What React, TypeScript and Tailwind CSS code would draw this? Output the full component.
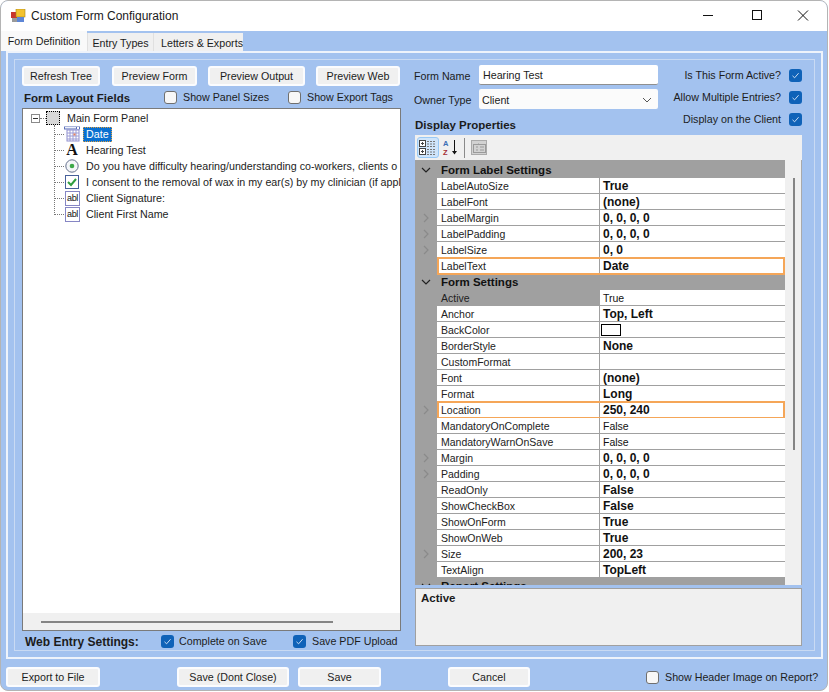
import React from "react";

function Check({ checked = false }: { checked?: boolean }) {
  if (!checked) return <span className="block w-[13px] h-[13px] shrink-0 rounded-[3px] border border-[#6f6f6f] bg-[#f7f7f7]" />;
  return (
    <span className="flex items-center justify-center w-[13px] h-[13px] shrink-0 rounded-[3px] bg-[#0f62b8]">
      <svg width="9" height="9" viewBox="0 0 9 9" fill="none" stroke="#dbe8f7" strokeWidth="0.9"><path d="M1.5 4.800 3.600 6.800 7.600 2.200" /></svg>
    </span>
  );
}

function Btn({ label, w, className = "" }: { label: string; w: string; className?: string }) {
  return (
    <div className={`${w} ${className} h-[20px] shrink-0 flex items-center justify-center pt-px rounded-[3px] border-2 border-[#fbfcfe] bg-[#f0f0f0] text-[#1c1c1c]`}>{label}</div>
  );
}

function TreeIcon({ kind }: { kind: string }) {
  if (kind === "date")
    return (
      <svg width="16" height="16" viewBox="0 0 16 16" className="shrink-0">
        <rect x="0" y="0.500" width="16" height="3" fill="#5b6fb8" />
        <rect x="1" y="1" width="11" height="1.500" fill="#eef1fb" />
        <rect x="13" y="1" width="2" height="2" fill="#fff" />
        <rect x="3" y="4" width="12" height="11" fill="#fff" stroke="#8f8fd0" />
        <path d="M3 7h12M3 10h12M3 13h12M6 4v11M9 4v11M12 4v11" stroke="#9c9cd6" strokeWidth="1" />
        <rect x="9.500" y="7.500" width="2" height="2" fill="#e8825a" />
      </svg>
    );
  if (kind === "text")
    return <span className="w-4 h-4 shrink-0 flex items-center justify-center font-['Liberation_Serif',serif] font-bold text-[16px] leading-none text-[#111]">A</span>;
  if (kind === "radio")
    return (
      <svg width="16" height="16" viewBox="0 0 16 16" className="shrink-0">
        <circle cx="8" cy="8" r="6.200" fill="#f4f6f9" stroke="#64708c" />
        <circle cx="8" cy="8" r="2.300" fill="#3ea84a" />
      </svg>
    );
  if (kind === "check")
    return (
      <svg width="16" height="16" viewBox="0 0 16 16" className="shrink-0">
        <rect x="1.500" y="1.500" width="13" height="13" fill="#fff" stroke="#46609a" />
        <path d="M4 8l3 3 5-6" fill="none" stroke="#2f9e3f" strokeWidth="2" />
      </svg>
    );
  return (
    <span className="w-[15px] h-[15px] ml-px shrink-0 flex items-center justify-center border border-[#8686c4] bg-white text-[9px] leading-none tracking-[-0.3px] text-[#111]">abl</span>
  );
}

const treeItems = [
  { kind: "date", label: "Date", sel: true },
  { kind: "text", label: "Hearing Test" },
  { kind: "radio", label: "Do you have difficulty hearing/understanding co-workers, clients o" },
  { kind: "check", label: "I consent to the removal of wax in my ear(s) by my clinician (if applic" },
  { kind: "abl", label: "Client Signature:" },
  { kind: "abl", label: "Client First Name" },
];

type Row = { n: string; v?: string; bold?: boolean; chev?: boolean; hl?: boolean; active?: boolean; swatch?: boolean; header?: boolean };

const rows: Row[] = [
  { header: true, n: "Form Label Settings" },
  { n: "LabelAutoSize", v: "True", bold: true },
  { n: "LabelFont", v: "(none)", bold: true },
  { n: "LabelMargin", v: "0, 0, 0, 0", bold: true, chev: true },
  { n: "LabelPadding", v: "0, 0, 0, 0", bold: true, chev: true },
  { n: "LabelSize", v: "0, 0", bold: true, chev: true },
  { n: "LabelText", v: "Date", bold: true, hl: true },
  { header: true, n: "Form Settings" },
  { n: "Active", v: "True", active: true },
  { n: "Anchor", v: "Top, Left", bold: true },
  { n: "BackColor", swatch: true },
  { n: "BorderStyle", v: "None", bold: true },
  { n: "CustomFormat" },
  { n: "Font", v: "(none)", bold: true },
  { n: "Format", v: "Long", bold: true },
  { n: "Location", v: "250, 240", bold: true, chev: true, hl: true },
  { n: "MandatoryOnComplete", v: "False" },
  { n: "MandatoryWarnOnSave", v: "False" },
  { n: "Margin", v: "0, 0, 0, 0", bold: true, chev: true },
  { n: "Padding", v: "0, 0, 0, 0", bold: true, chev: true },
  { n: "ReadOnly", v: "False", bold: true },
  { n: "ShowCheckBox", v: "False", bold: true },
  { n: "ShowOnForm", v: "True", bold: true },
  { n: "ShowOnWeb", v: "True", bold: true },
  { n: "Size", v: "200, 23", bold: true, chev: true },
  { n: "TextAlign", v: "TopLeft", bold: true },
  { header: true, n: "Report Settings" },
];

function GridRow({ r }: { r: Row }) {
  if (r.header)
    return (
      <div className="h-4 shrink-0 flex items-center bg-[#a0a0a0] font-bold text-[11.5px] text-[#111]">
        <span className="w-[22px] shrink-0 flex justify-center">
          <svg width="10" height="6" viewBox="0 0 10 6" fill="none" stroke="#222" strokeWidth="1.200"><path d="M1 1l4 4 4-4" /></svg>
        </span>
        <span className="pl-[4px] pt-px">{r.n}</span>
      </div>
    );
  return (
    <div className="relative h-4 shrink-0 flex bg-[#a0a0a0]">
      <span className="w-[22px] shrink-0 flex items-center justify-center">
        {r.chev && (
          <svg width="6" height="10" viewBox="0 0 6 10" fill="none" stroke="#8a8a8a" strokeWidth="1.200"><path d="M1 1l4 4-4 4" /></svg>
        )}
      </span>
      <div className={`w-[162px] shrink-0 pl-[4px] pt-px flex items-center border-b border-[#a0a0a0] text-[10.5px] text-[#222] ${r.active ? "bg-[#a0a0a0]" : "bg-white"}`}>{r.n}</div>
      <div className={`flex-1 ml-px pl-[3px] pt-px flex items-center border-b border-[#a0a0a0] bg-white text-[#111] ${r.bold ? "font-bold text-[12px]" : "text-[10.5px]"}`}>
        {r.swatch ? <span className="block w-[20px] h-[12px] -ml-[2px] -mt-px border border-black bg-white" /> : r.v}
      </div>
      {r.hl && <span className="absolute left-[22px] right-0 -top-[1px] -bottom-[1px] border-2 border-[#f5a658]" />}
    </div>
  );
}

export default function App() {
  return (
    <div className="w-[829px] h-[692px] overflow-hidden bg-white font-['Liberation_Sans',sans-serif] text-[10.7px] leading-none text-[#1c1c1c]">
      <div className="w-[828px] h-[691px] flex flex-col rounded-lg border-[1.5px] border-[#b4b4b4] overflow-hidden bg-[#a3c2ef]">
        {/* title */}
        <div className="h-[30px] shrink-0 bg-white flex items-center">
          <svg width="15" height="15" viewBox="0 0 15 15" className="ml-[10px] shrink-0">
            <rect x="0" y="3" width="6" height="6" fill="#c8362e" />
            <rect x="5" y="0" width="9" height="8" fill="#f2c230" stroke="#a88518" strokeWidth="0.600" />
            <rect x="1" y="9" width="5" height="4" fill="#9a9a9a" />
            <rect x="6" y="8" width="7" height="5" fill="#5d86d6" />
          </svg>
          <span className="ml-[5px] text-[12px] text-[#1a1a1a]">Custom Form Configuration</span>
          <div className="ml-auto flex items-center">
            <svg width="46" height="30" viewBox="0 0 46 30" className="shrink-0"><path d="M14 14.500h10" stroke="#111" strokeWidth="1" /></svg>
            <svg width="46" height="30" viewBox="0 0 46 30" className="shrink-0"><rect x="17.500" y="9.500" width="9" height="9" fill="none" stroke="#111" /></svg>
            <svg width="46" height="30" viewBox="0 0 46 30" className="shrink-0"><path d="M17 9.500l10 10M27 9.500l-10 10" stroke="#111" strokeWidth="1" /></svg>
          </div>
        </div>
        {/* tabs */}
        <div className="h-[20px] shrink-0 flex items-end">
          <div className="w-[86px] h-[20px] flex items-center justify-center bg-[#f9f9f9]">Form Definition</div>
          <div className="w-[66px] h-[18px] pt-[2px] flex items-center justify-center bg-[#f0f0f0] border-l border-[#e0e0e0]">Entry Types</div>
          <div className="w-[90px] h-[18px] pt-[2px] pl-[7px] flex items-center bg-[#f0f0f0] border-l border-[#e0e0e0]">Letters &amp; Exports</div>
        </div>
        {/* tab panel */}
        <div className="ml-[5px] w-[817px] h-[608px] shrink-0 border-2 border-[#eef3fb] p-[6px]">
          <div className="w-full h-full border border-[#c9daf3] flex pl-[7px] pt-[6px] gap-[13px]">
            {/* left column */}
            <div className="w-[379px] shrink-0 flex flex-col">
              <div className="flex shrink-0">
                <Btn label="Refresh Tree" w="w-[78px]" />
                <Btn label="Preview Form" w="w-[85px]" className="ml-[12px]" />
                <Btn label="Preview Output" w="w-[97px]" className="ml-[11px]" />
                <Btn label="Preview Web" w="w-[84px]" className="ml-[11px]" />
              </div>
              <div className="h-[22px] shrink-0 flex items-center">
                <span className="ml-[2px] w-[140px] font-bold text-[11.5px] pt-[4px]">Form Layout Fields</span>
                <Check />
                <span className="ml-[6px] w-[105px] pt-px">Show Panel Sizes</span>
                <Check />
                <span className="ml-[6px] pt-px">Show Export Tags</span>
              </div>
              {/* tree */}
              <div className="relative h-[523px] shrink-0 border border-[#7a7a7a] bg-white flex flex-col overflow-hidden">
                <div className="h-4 mt-[1px] flex items-center shrink-0">
                  <span className="ml-[8px] w-[9px] h-[9px] shrink-0 border border-[#8a8a8a] flex items-center justify-center bg-white">
                    <span className="block w-[5px] h-px bg-[#333]" />
                  </span>
                  <span className="w-[6px] shrink-0 border-t border-dotted border-[#777]" />
                  <span className="w-[14px] h-[14px] shrink-0 border border-dotted border-black bg-[#d8d8d8]" />
                  <span className="ml-[7px] pt-px">Main Form Panel</span>
                </div>
                {treeItems.map((t) => (
                  <div key={t.label} className="h-4 flex items-center shrink-0 overflow-hidden">
                    <span className="ml-[31px] w-[10px] shrink-0 border-t border-dotted border-[#777]" />
                    <TreeIcon kind={t.kind} />
                    <span className={`ml-[3px] h-[15px] min-w-0 overflow-hidden flex items-center whitespace-nowrap pt-px ${t.sel ? "px-[2px] bg-[#0a70d0] text-white border border-dotted border-[#e0a040]" : "px-[3px]"}`}>{t.label}</span>
                  </div>
                ))}
                <span className="absolute left-[31px] top-[16px] h-[90px] border-l border-dotted border-[#777]" />
                <div className="absolute left-0 right-0 bottom-0 h-[17px] bg-[#f0f0f0] flex items-center pl-[18px]">
                  <span className="block w-[292px] h-[2px] bg-[#858585]" />
                </div>
              </div>
              <div className="h-[20px] shrink-0 flex items-center whitespace-nowrap">
                <span className="ml-[3px] w-[136px] font-bold text-[12px] pt-px">Web Entry Settings:</span>
                <Check checked />
                <span className="ml-[5px] w-[114px] pt-px">Complete on Save</span>
                <Check checked />
                <span className="ml-[6px] pt-px">Save PDF Upload</span>
              </div>
            </div>
            {/* right column */}
            <div className="w-[388px] shrink-0 flex flex-col">
              <div className="h-[69px] shrink-0 flex">
                <div className="w-[244px] shrink-0 flex flex-col -mt-[1px]">
                  <div className="h-[20px] flex items-center">
                    <span className="w-[65px] pt-[2px]">Form Name</span>
                    <div className="w-[179px] h-[20px] bg-white border-b border-[#8f8f8f] rounded-[2px] flex items-center pl-[4px] pt-px">Hearing Test</div>
                  </div>
                  <div className="h-[20px] mt-[4px] flex items-center">
                    <span className="w-[65px] pt-[3px]">Owner Type</span>
                    <div className="w-[179px] h-[20px] bg-[#fbfbfb] rounded-[2px] flex items-center pl-[3px] pt-[2px]">
                      Client
                      <svg width="10" height="6" viewBox="0 0 10 6" fill="none" stroke="#555" className="ml-auto mr-[6px]"><path d="M1 1l4 4 4-4" /></svg>
                    </div>
                  </div>
                  <div className="mt-[11px] ml-px font-bold text-[11.5px]">Display Properties</div>
                </div>
                <div className="flex-1 flex flex-col items-end gap-1">
                  {["Is This Form Active?", "Allow Multiple Entries?", "Display on the Client"].map((l) => (
                    <div key={l} className="h-[18px] flex items-center">
                      <span className="pt-px">{l}</span>
                      <span className="w-[8px]" />
                      <Check checked />
                    </div>
                  ))}
                </div>
              </div>
              {/* toolbar */}
              <div className="ml-px h-[25px] shrink-0 bg-[#f0f0f0] flex items-center pl-[2px]">
                <span className="w-[22px] h-[21px] rounded-[3px] border border-[#99c9f5] bg-[#cfe5fb] flex items-center justify-center">
                  <svg width="18" height="17" viewBox="0 0 18 17" fill="none" stroke="#444">
                    <rect x="0.500" y="1.500" width="6" height="6" fill="#fff" /><path d="M2 4.500h3M3.500 3v3" />
                    <rect x="0.500" y="9.500" width="6" height="6" fill="#fff" /><path d="M2 12.500h3M3.500 11v3" />
                    <path d="M8 2.500h9M8 5h9M8 7.500h9M8 10.500h9M8 13h9M8 15.500h9" stroke="#777" strokeDasharray="2 1" />
                  </svg>
                </span>
                <span className="w-[24px] h-[21px] flex items-center justify-center">
                  <svg width="18" height="17" viewBox="0 0 18 17">
                    <text x="1" y="7" fontSize="7.500" fontWeight="bold" fill="#3d6fb5" fontFamily="Liberation Sans">A</text>
                    <text x="1" y="16" fontSize="7.500" fontWeight="bold" fill="#a52c35" fontFamily="Liberation Sans">Z</text>
                    <path d="M12.500 1v13" stroke="#111" /><path d="M10 12h5l-2.500 3.500z" fill="#111" />
                  </svg>
                </span>
                <span className="ml-[1px] w-px h-[20px] bg-[#8a8a8a]" />
                <span className="ml-[6px] w-[16px] h-[15px] flex items-center justify-center bg-[#d2d2d2] border border-[#aaa]">
                  <svg width="13" height="10" viewBox="0 0 13 10" fill="none" stroke="#9a9a9a"><rect x="0.500" y="1.500" width="12" height="8" /><path d="M0.500 1.500h5v-1M3 4h2M7 4h4M3 7h2M7 7h4" /></svg>
                </span>
              </div>
              {/* grid */}
              <div className="ml-px h-[425px] shrink-0 flex overflow-hidden">
                <div className="w-[370px] shrink-0 flex flex-col bg-[#a0a0a0] pt-[2px] overflow-hidden">
                  {rows.map((r) => <GridRow key={r.n} r={r} />)}
                </div>
                <div className="flex-1 bg-[#f0f0f0] border-r border-[#a9a9a9] relative">
                  <span className="absolute left-[8px] top-[18px] h-[272px] w-[2px] bg-[#858585]" />
                </div>
              </div>
              {/* description */}
              <div className="ml-px mt-[3px] h-[58px] shrink-0 border border-[#a0a0a0] bg-[#f0f0f0] pl-[5px] pt-[4px] font-bold text-[11.5px]">Active</div>
            </div>
          </div>
        </div>
        {/* bottom */}
        <div className="flex-1 flex items-start pt-[8px] pl-[5px]">
          <Btn label="Export to File" w="w-[94px]" />
          <Btn label="Save (Dont Close)" w="w-[112px]" className="ml-[77px]" />
          <Btn label="Save" w="w-[83px]" className="ml-[9px]" />
          <Btn label="Cancel" w="w-[82px]" className="ml-[67px]" />
          <div className="h-[20px] ml-[116px] flex items-center whitespace-nowrap">
            <Check />
            <span className="ml-[6px] pt-px">Show Header Image on Report?</span>
          </div>
        </div>
      </div>
    </div>
  );
}
